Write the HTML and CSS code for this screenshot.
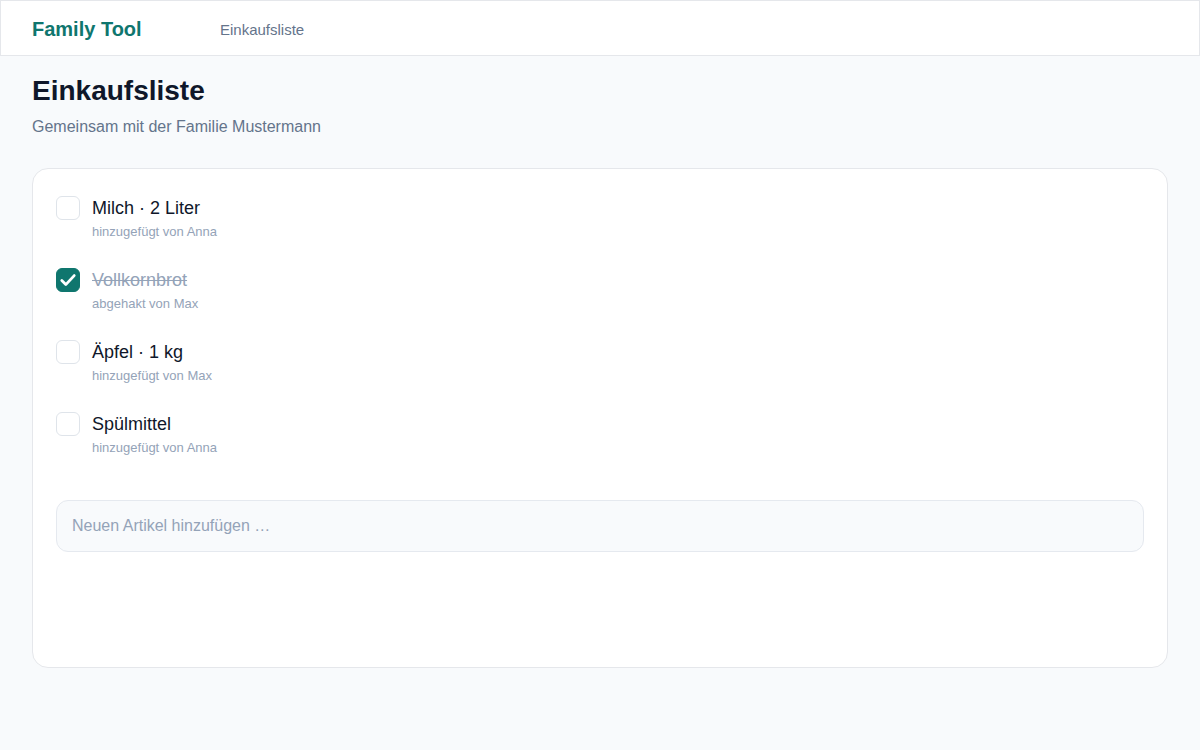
FILE: index.html
```html
<!DOCTYPE html>
<html lang="de">
<head>
<meta charset="utf-8">
<title>Family Tool – Einkaufsliste</title>
<link rel="stylesheet" href="styles.css">
</head>
<body>
<header class="topbar">
  <div class="brand">Family Tool</div>
  <nav class="nav"><a class="nav-link" href="#">Einkaufsliste</a></nav>
</header>
<main class="main">
  <h1 class="title">Einkaufsliste</h1>
  <p class="subtitle">Gemeinsam mit der Familie Mustermann</p>
  <section class="card">
    <ul class="list">
      <li class="item">
        <span class="box"></span>
        <div class="text">
          <div class="name">Milch · 2 Liter</div>
          <div class="meta">hinzugefügt von Anna</div>
        </div>
      </li>
      <li class="item done">
        <span class="box checked">
          <svg viewBox="0 0 24 24" width="24" height="24"><path d="M5.8 12.6l4 4 8.4-9" fill="none" stroke="#fff" stroke-width="2.8" stroke-linecap="round" stroke-linejoin="round"/></svg>
        </span>
        <div class="text">
          <div class="name">Vollkornbrot</div>
          <div class="meta">abgehakt von Max</div>
        </div>
      </li>
      <li class="item">
        <span class="box"></span>
        <div class="text">
          <div class="name">Äpfel · 1 kg</div>
          <div class="meta">hinzugefügt von Max</div>
        </div>
      </li>
      <li class="item">
        <span class="box"></span>
        <div class="text">
          <div class="name">Spülmittel</div>
          <div class="meta">hinzugefügt von Anna</div>
        </div>
      </li>
    </ul>
    <input class="add" type="text" placeholder="Neuen Artikel hinzufügen …">
  </section>
</main>
</body>
</html>
```

FILE: styles.css
```css
* { box-sizing: border-box; }
html, body { margin: 0; padding: 0; }
body {
  background: #f8fafc;
  font-family: "Liberation Sans", Arial, sans-serif;
  color: #0f172a;
}
.topbar {
  height: 56px;
  background: #ffffff;
  border: 1px solid #e5e7eb;
  display: flex;
  align-items: center;
  padding: 2px 31px 0;
}
.brand {
  font-size: 20px;
  font-weight: 700;
  color: #0f766e;
  width: 188px;
}
.nav {
  padding-top: 2px;
}
.nav-link {
  font-size: 15px;
  color: #64748b;
  text-decoration: none;
}
.main {
  padding: 18px 32px 0;
}
.title {
  margin: 0;
  font-size: 28px;
  line-height: 34px;
  font-weight: 700;
  color: #0f172a;
}
.subtitle {
  margin: 9px 0 0;
  font-size: 16px;
  line-height: 19px;
  color: #64748b;
}
.card {
  margin-top: 32px;
  height: 500px;
  background: #ffffff;
  border: 1px solid #e5e7eb;
  border-radius: 16px;
  padding: 23px 23px;
}
.list {
  list-style: none;
  margin: 0;
  padding: 0;
  display: flex;
  flex-direction: column;
  gap: 19px;
}
.item {
  display: flex;
  align-items: flex-start;
  gap: 12px;
  padding: 4px 0;
}
.box {
  width: 24px;
  height: 24px;
  flex: none;
  border: 1px solid #dfe4ea;
  border-radius: 6px;
  background: #fff;
  display: flex;
  align-items: center;
  justify-content: center;
}
.box.checked {
  background: #0f766e;
  border-color: #0f766e;
}
.box svg { flex: none; }
.name {
  font-size: 18px;
  line-height: 24px;
  color: #0f172a;
}
.meta {
  margin-top: 3px;
  font-size: 13px;
  line-height: 18px;
  color: #94a3b8;
}
.done .name {
  color: #94a3b8;
  text-decoration: line-through;
}
.add {
  display: block;
  width: 100%;
  margin-top: 39px;
  height: 52px;
  border: 1px solid #e5e9ef;
  border-radius: 12px;
  background: #f8fafc;
  padding: 0 15px;
  font-family: "Liberation Sans", Arial, sans-serif;
  font-size: 16px;
  color: #0f172a;
  outline: none;
}
.add::placeholder { color: #94a3b8; }
```
